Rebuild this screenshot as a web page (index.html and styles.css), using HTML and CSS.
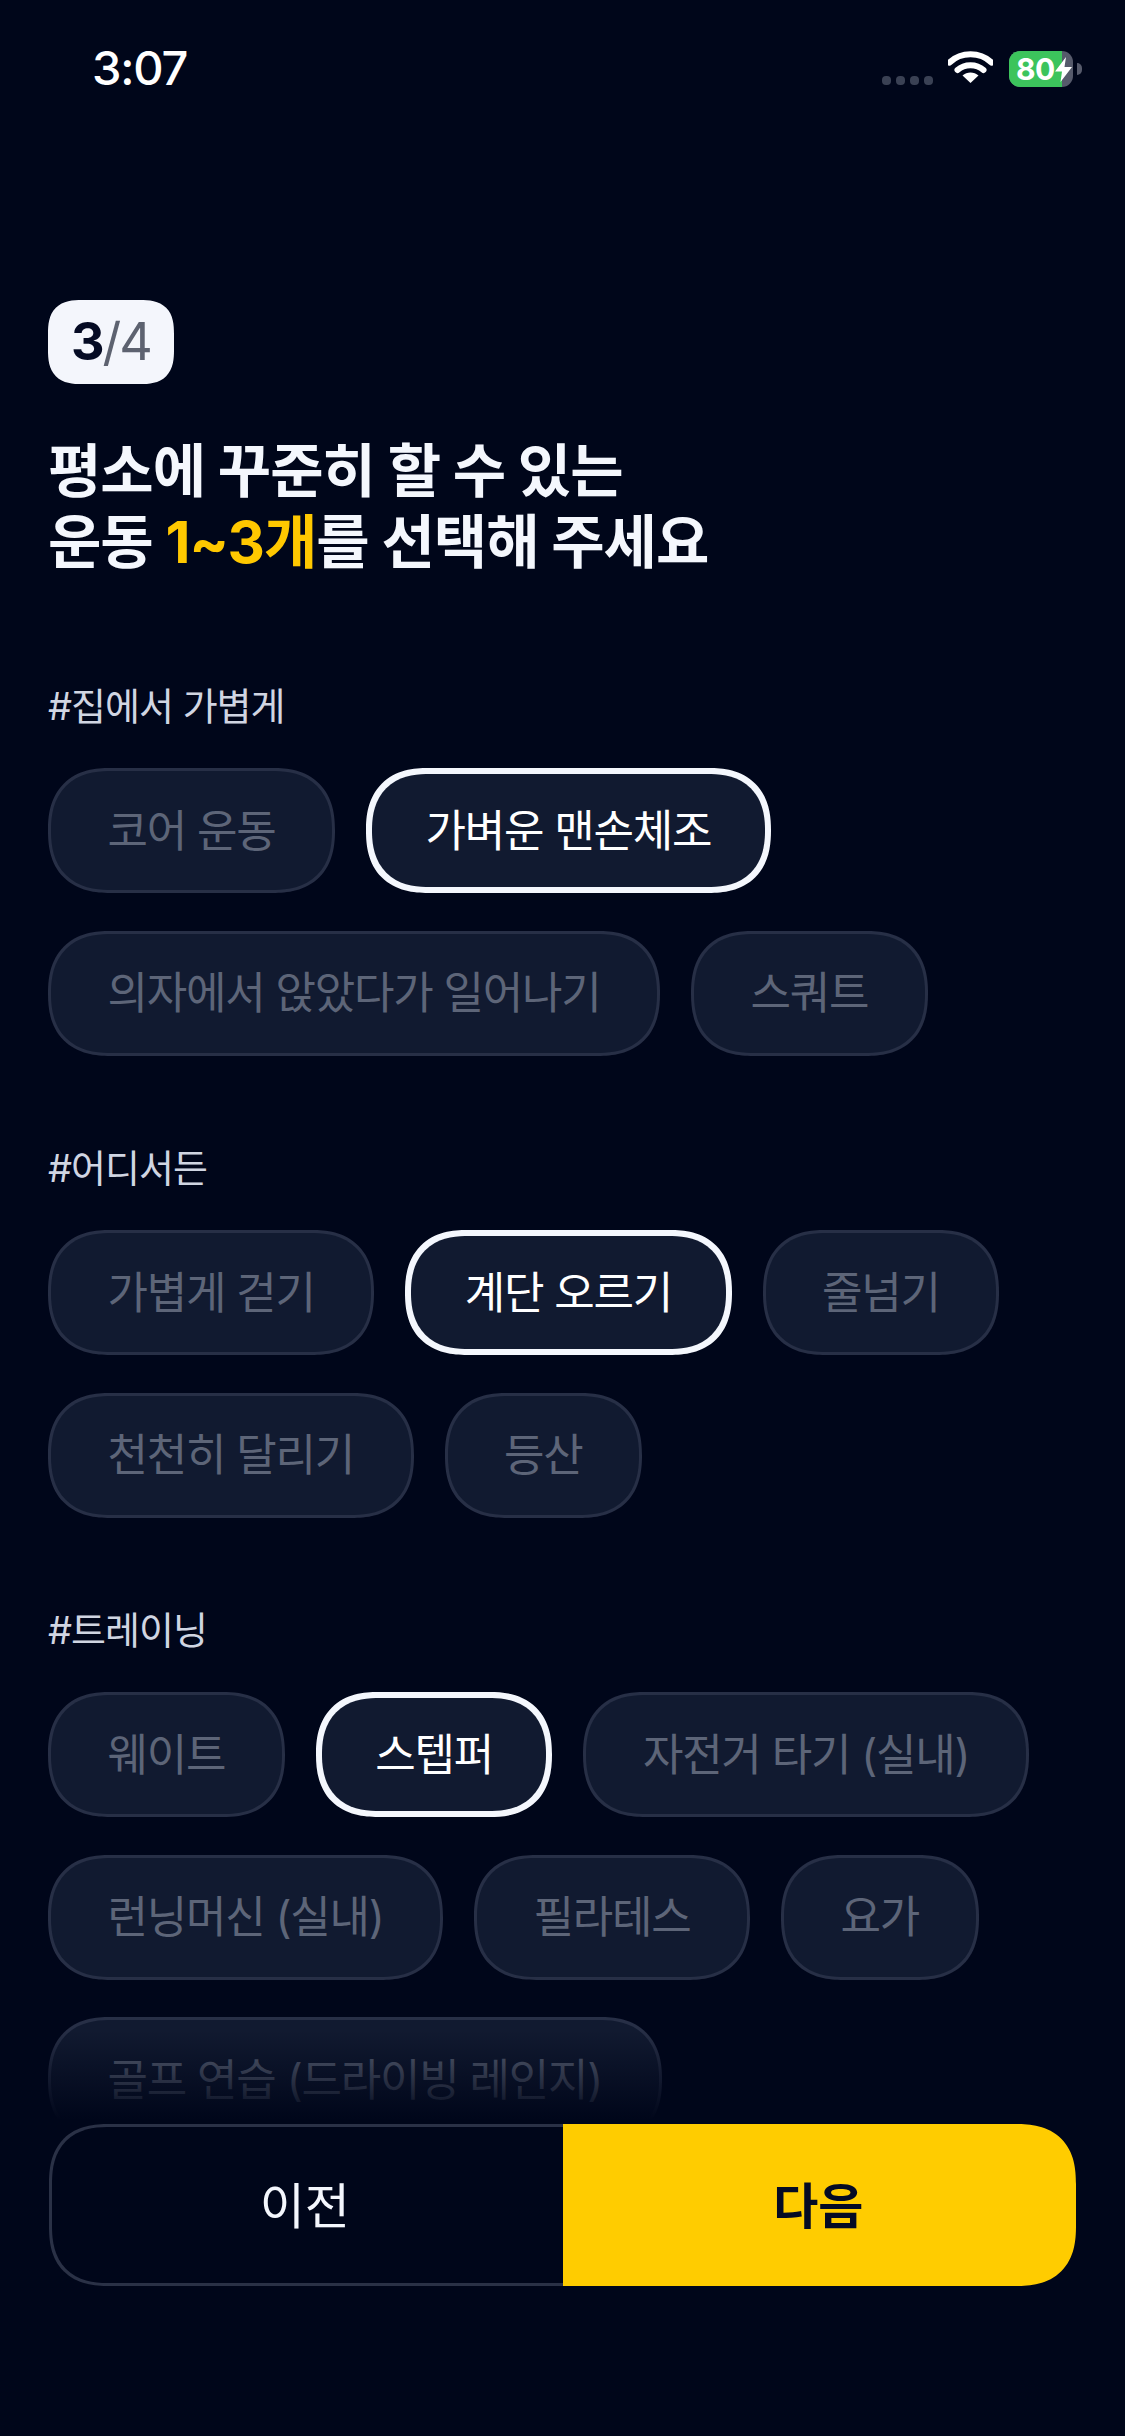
FILE: index.html
```html
<!DOCTYPE html>
<html lang="ko">
<head>
<meta charset="utf-8">
<title>운동 선택</title>
<link rel="stylesheet" href="styles.css">
</head>
<body>
<div class="screen">
  <header class="status">
    <span class="time">3:07</span>
    <div class="status-icons">
      <div class="signal"><i></i><i></i><i></i><i></i></div>
      <svg class="wifi" viewBox="0 0 45 32" aria-hidden="true">
        <path d="M1.5 11.5 C 13 0.5 32 0.5 43.5 11.5" fill="none" stroke="#fff" stroke-width="6" stroke-linecap="round"/>
        <path d="M9.5 19 C 16.5 12.5 28.5 12.5 35.5 19" fill="none" stroke="#fff" stroke-width="6" stroke-linecap="round"/>
        <path d="M22.5 32 L14.5 24.5 C 19 20.5 26 20.5 30.5 24.5 Z" fill="#fff"/>
      </svg>
      <div class="battery">
        <div class="battery-body">
          <div class="battery-fill"></div>
          <span class="battery-text">80</span>
          <svg class="bolt" viewBox="0 0 17 25" aria-hidden="true"><path d="M11 0 L0 14.5 H7 L5.5 25 L17 10 H9.5 Z" fill="#fff"/></svg>
        </div>
        <div class="battery-nub"></div>
      </div>
    </div>
  </header>

  <main class="content">
    <div class="badge"><b>3</b><span>/4</span></div>
    <h1 class="title">평소에 꾸준히 할 수 있는<br>운동 <em>1~3개</em>를 선택해 주세요</h1>

    <section class="group">
      <h2 class="group-label">#집에서 가볍게</h2>
      <div class="chips">
        <div class="chip">코어 운동</div>
        <div class="chip selected">가벼운 맨손체조</div>
        <div class="chip">의자에서 앉았다가 일어나기</div>
        <div class="chip">스쿼트</div>
      </div>
    </section>

    <section class="group">
      <h2 class="group-label">#어디서든</h2>
      <div class="chips">
        <div class="chip">가볍게 걷기</div>
        <div class="chip selected">계단 오르기</div>
        <div class="chip">줄넘기</div>
        <div class="chip">천천히 달리기</div>
        <div class="chip">등산</div>
      </div>
    </section>

    <section class="group">
      <h2 class="group-label">#트레이닝</h2>
      <div class="chips">
        <div class="chip">웨이트</div>
        <div class="chip selected">스텝퍼</div>
        <div class="chip">자전거 타기 (실내)</div>
        <div class="chip">런닝머신 (실내)</div>
        <div class="chip">필라테스</div>
        <div class="chip">요가</div>
        <div class="chip">골프 연습 (드라이빙 레인지)</div>
      </div>
    </section>
  </main>

  <footer class="footer">
    <div class="actions">
      <div class="btn prev">이전</div>
      <div class="btn next">다음</div>
    </div>
  </footer>
</div>
</body>
</html>
```
FILE: styles.css
```css
* { box-sizing: border-box; }
html, body { margin: 0; padding: 0; }
body {
  background: #00061a;
  font-family: Inter, "Noto Sans CJK KR", "Noto Sans", sans-serif;
  color: #f4f7fd;
}
.screen {
  position: relative;
  width: 1125px;
  height: 2436px;
  overflow: hidden;
  background: #00061a;
}
.status {
  height: 136px;
  padding: 44px 43px 0 92px;
  display: flex;
  justify-content: space-between;
  align-items: flex-start;
}
.time {
  font-size: 47px;
  line-height: 48px;
  font-weight: 500;
  color: #fff;
  letter-spacing: -1.2px;
}
.status-icons {
  display: flex;
  align-items: flex-start;
  padding-top: 7px;
}
.signal {
  display: flex;
  gap: 5px;
  margin-top: 25px;
  margin-right: 15px;
}
.signal i {
  width: 9px;
  height: 9px;
  border-radius: 4px;
  background: #3a4154;
}
.wifi {
  width: 45px;
  height: 32px;
  display: block;
  margin-right: 16px;
}
.battery {
  display: flex;
  align-items: center;
}
.battery-body {
  position: relative;
  width: 64px;
  height: 36px;
  border-radius: 11px;
  background: #565a6b;
  overflow: hidden;
  display: flex;
  align-items: center;
  padding-left: 7px;
}
.battery-fill {
  position: absolute;
  left: 0;
  top: 0;
  bottom: 0;
  width: 53px;
  background: #3cc45c;
}
.battery-text {
  position: relative;
  font-size: 30px;
  line-height: 36px;
  font-weight: 700;
  color: #fff;
  letter-spacing: -0.5px;
}
.bolt {
  position: relative;
  width: 17px;
  height: 25px;
}
.battery-nub {
  width: 5px;
  height: 12px;
  margin-left: 4px;
  border-radius: 0 5px 5px 0;
  background: #565a6b;
}
.content {
  padding: 164px 0 0 48px;
}
.badge {
  width: 126px;
  height: 84px;
  border-radius: 34px;
  corner-shape: superellipse(1.4);
  background: #f4f6fc;
  display: flex;
  align-items: center;
  justify-content: center;
  font-size: 52px;
  line-height: 60px;
  letter-spacing: -2px;
  color: #5d6270;
}
.badge b {
  font-weight: 700;
  color: #050b24;
}
.badge span {
  font-weight: 400;
}
.title {
  margin: 52px 0 0;
  font-size: 58px;
  line-height: 71px;
  font-weight: 700;
  letter-spacing: -1px;
  color: #f4f7fd;
}
.title em {
  font-style: normal;
  color: #ffc800;
}
.group {
  margin-top: 89.5px;
}
.group:first-of-type {
  margin-top: 105px;
}
.group-label {
  margin: 0 0 39px;
  font-size: 38px;
  line-height: 46px;
  font-weight: 400;
  color: #d0d5e2;
  letter-spacing: -1px;
}
.chips {
  display: flex;
  flex-wrap: wrap;
  gap: 37.5px 31px;
  width: 1040px;
}
.chip {
  height: 125px;
  padding: 0 56.5px;
  display: flex;
  align-items: center;
  border: 3px solid #272f46;
  border-radius: 62px;
  corner-shape: superellipse(1.25);
  background: #111a30;
  font-size: 44px;
  line-height: 50px;
  color: #5d6578;
  letter-spacing: -1.25px;
  white-space: nowrap;
}
.chip.selected {
  border: 6px solid #f4f7fd;
  padding: 0 53.5px;
  color: #fff;
}
.footer {
  position: absolute;
  left: 0;
  right: 0;
  bottom: 0;
  height: 406px;
  padding: 94px 49px 0;
  background: linear-gradient(to bottom, rgba(0, 6, 26, 0) 0, #00061a 90px);
}
.actions {
  display: grid;
  grid-template-columns: 1fr 1fr;
  height: 162px;
}
.btn {
  display: flex;
  align-items: center;
  justify-content: center;
  font-size: 49px;
  padding-bottom: 5px;
}
.prev {
  border: 3px solid #2a3146;
  border-right: 0;
  border-radius: 60px 0 0 60px;
  corner-shape: superellipse(1.3);
  color: #f4f7fd;
  background: #00061a;
  padding-right: 5px;
}
.next {
  border-radius: 0 60px 60px 0;
  corner-shape: superellipse(1.3);
  background: #ffcc00;
  color: #050b24;
  font-weight: 700;
  padding-right: 2px;
}
```
